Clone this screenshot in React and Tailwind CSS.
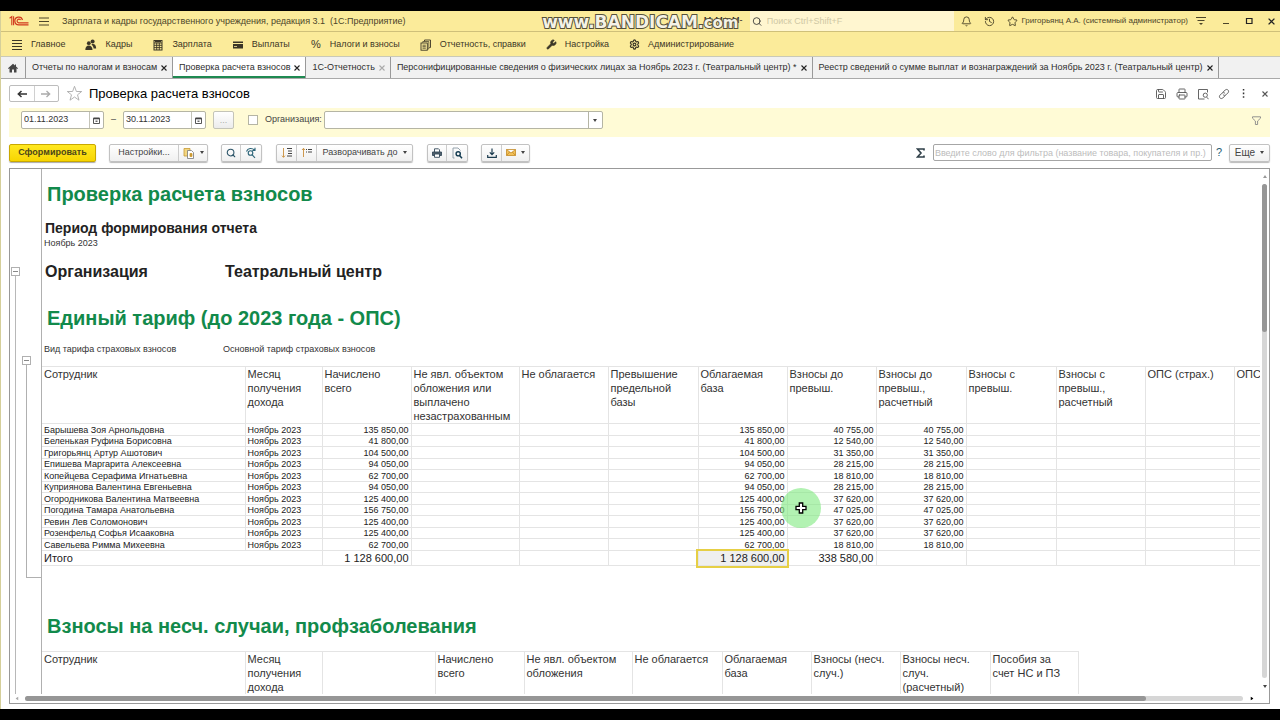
import React from "react";
import { Bell, History, Star, Search, Wrench, Save, Printer, Settings } from "lucide-react";

const employees = [
  ["Барышева Зоя Арнольдовна", "135 850,00", "40 755,00"],
  ["Беленькая Руфина Борисовна", "41 800,00", "12 540,00"],
  ["Григорьянц Артур Ашотович", "104 500,00", "31 350,00"],
  ["Епишева Маргарита Алексеевна", "94 050,00", "28 215,00"],
  ["Копейцева Серафима Игнатьевна", "62 700,00", "18 810,00"],
  ["Куприянова Валентина Евгеньевна", "94 050,00", "28 215,00"],
  ["Огородникова Валентина Матвеевна", "125 400,00", "37 620,00"],
  ["Погодина Тамара Анатольевна", "156 750,00", "47 025,00"],
  ["Ревин Лев Соломонович", "125 400,00", "37 620,00"],
  ["Розенфельд Софья Исааковна", "125 400,00", "37 620,00"],
  ["Савельева Римма Михеевна", "62 700,00", "18 810,00"],
];

const tariffColumns = [
  "Сотрудник",
  "Месяц получения дохода",
  "Начислено всего",
  "Не явл. объектом обложения или выплачено незастрахованным",
  "Не облагается",
  "Превышение предельной базы",
  "Облагаемая база",
  "Взносы до превыш.",
  "Взносы до превыш., расчетный",
  "Взносы с превыш.",
  "Взносы с превыш., расчетный",
  "ОПС (страх.)",
  "ОПС",
];

const accidentColumns = [
  "Сотрудник",
  "Месяц получения дохода",
  "",
  "Начислено всего",
  "Не явл. объектом обложения",
  "Не облагается",
  "Облагаемая база",
  "Взносы (несч. случ.)",
  "Взносы несч. случ. (расчетный)",
  "Пособия за счет НС и ПЗ",
];

function PeopleIcon() {
  return (
    <svg viewBox="0 0 12 12" className="h-3 w-3" fill="currentColor">
      <circle cx="7.6" cy="2.6" r="2" />
      <path d="M6.400 5.400c2.600-1 4.600.2 4.800 4H8.600C8.500 7.600 7.600 6.400 6.400 5.400z" />
      <circle cx="3.800" cy="4.200" r="1.900" />
      <path d="M.3 11c0-3 1.400-4.500 3.500-4.500S7.500 8 7.500 11z" />
    </svg>
  );
}

function CalculatorIcon() {
  return (
    <svg viewBox="0 0 12 12" className="h-3 w-3" fill="none" stroke="currentColor">
      <rect x="2" y="1.500" width="8" height="9.500" />
      <path d="M2 4h8M2 6.300h8M2 8.600h8M4.700 4v7M7.300 4v7" strokeWidth=".9" />
      <path d="M3 2.700h6" strokeWidth="1.400" />
    </svg>
  );
}

function CardIcon() {
  return (
    <svg viewBox="0 0 12 12" className="h-3 w-3" fill="currentColor">
      <path d="M1 2.500h10V4H1zM1 5h10v4.500H1z" />
      <path d="M2 7.500h3" stroke="#fbeb9a" strokeWidth=".8" />
    </svg>
  );
}

function ReportsIcon() {
  return (
    <svg viewBox="0 0 12 12" className="h-3 w-3" fill="none" stroke="currentColor" strokeWidth=".9">
      <path d="M4.500 2.300V1h6v7.500H9.300" />
      <path d="M2.800 3.800V2.500h6v7.500H7.500" strokeWidth=".7" />
      <rect x="1" y="4" width="6.300" height="7.200" />
      <path d="M2.500 6.200h3.300M2.500 7.700h3.300M2.500 9.200h3.300" strokeWidth=".8" />
    </svg>
  );
}

function MenuLines() {
  return (
    <svg viewBox="0 0 12 12" className="h-3 w-3" stroke="currentColor" strokeWidth="1.200">
      <path d="M1 1.500h10M1 4.500h10M1 7.500h10M1 10.500h10" />
    </svg>
  );
}

const sections = [
  ["Главное", <MenuLines />],
  ["Кадры", <PeopleIcon />],
  ["Зарплата", <CalculatorIcon />],
  ["Выплаты", <CardIcon />],
  ["Налоги и взносы", <span className="w-3 text-center text-[11px]">%</span>],
  ["Отчетность, справки", <ReportsIcon />],
  ["Настройка", <Wrench size={11} fill="currentColor" strokeWidth={1.5} />],
  ["Администрирование", <Settings size={11} strokeWidth={2.6} />],
];

const tabs = [
  ["Отчеты по налогам и взносам"],
  ["Проверка расчета взносов", "active"],
  ["1С-Отчетность", "muted"],
  ["Персонифицированные сведения о физических лицах за Ноябрь 2023 г. (Театральный центр) *"],
  ["Реестр сведений о сумме выплат и вознаграждений за Ноябрь 2023 г. (Театральный центр)"],
];

function Cross({ className }) {
  return (
    <svg viewBox="0 0 6 6" className={className} stroke="currentColor" strokeWidth="1.100">
      <path d="M.5.5l5 5M5.500.5l-5 5" />
    </svg>
  );
}

function Caret({ className = "text-[#444]" }) {
  return (
    <svg viewBox="0 0 4 3" className={"h-[3px] w-1 shrink-0 " + className} fill="currentColor">
      <path d="M0 0h4L2 3z" />
    </svg>
  );
}

function Logo() {
  return (
    <svg viewBox="0 0 20 12" className="h-3 w-5" fill="none" stroke="#d2381c">
      <path d="M.6 3.200L2.800 1.500v8.700M4.600 1.200v9" strokeWidth="1.100" />
      <path d="M13.500 5A3.900 3.900 0 1 0 9.800 9.900H19.500" strokeWidth="1.200" />
      <path d="M11.600 5A1.900 1.900 0 1 0 9.800 7.900H19.500" strokeWidth="1.100" />
    </svg>
  );
}

function TitleBar() {
  return (
    <header className="flex h-[21px] shrink-0 items-center border-b border-[#cfc07a] bg-[#fbeb9a] pl-2 text-[#4c4529]">
      <Logo />
      <button aria-label="Главное меню" className="ml-[10px]">
        <svg viewBox="0 0 10 9" className="h-[9px] w-[10px]" stroke="currentColor">
          <path d="M0 1h10M0 4.500h10M0 8h10" />
        </svg>
      </button>
      <h1 className="ml-[13px] grow whitespace-pre pt-[2px]">Зарплата и кадры государственного учреждения, редакция 3.1  (1С:Предприятие)</h1>
      <div className="relative mr-[8px] flex items-center">
        <div className="flex gap-1 text-[9px] text-[#222]">
          <button>M</button>
          <button>M+</button>
          <button>M-</button>
        </div>
        <div className="pointer-events-none absolute right-[4px] top-1/2 z-10 -translate-y-1/2 whitespace-nowrap pt-[3px] font-['DejaVu_Sans'] text-[17px] font-bold leading-none text-[#f4f2e6] [-webkit-text-stroke:2px_#55503a] [paint-order:stroke_fill]">
          www.BANDICAM<span className="text-[15px]">.com</span>
        </div>
      </div>
      <label className="flex h-full w-[204px] items-center gap-1 bg-[#fff6d0] pl-0.5">
        <Search size={11} strokeWidth={2} className="text-[#333]" />
        <input aria-label="Поиск" placeholder="Поиск Ctrl+Shift+F" className="w-full bg-transparent pt-px outline-none placeholder:text-[#cfc8a4]" />
      </label>
      <div className="ml-[7px] flex items-center gap-3">
        <button aria-label="Уведомления"><Bell size={11} strokeWidth={2} /></button>
        <button aria-label="История"><History size={11} strokeWidth={2} /></button>
        <button aria-label="Избранное"><Star size={11} strokeWidth={2} /></button>
      </div>
      <span className="ml-[3px] whitespace-nowrap text-[8px]">Григорьянц А.А. (системный администратор)</span>
      <button aria-label="Сервис" className="ml-[8px]">
        <svg viewBox="0 0 10 10" className="h-[10px] w-[10px]" stroke="currentColor">
          <path d="M0 1.500h10M1.500 4.500h7" />
          <path d="M3 7h4L5 9z" fill="currentColor" stroke="none" />
        </svg>
      </button>
      <button aria-label="Свернуть" className="ml-4">
        <svg viewBox="0 0 8 8" className="h-2 w-2" stroke="currentColor"><path d="M1 6.500h6" /></svg>
      </button>
      <button aria-label="Развернуть" className="ml-[15px]">
        <svg viewBox="0 0 8 8" className="h-2 w-2" fill="none" stroke="#222" strokeWidth="1.200"><path d="M1.500 1.500h5.500v5H1.500z" /></svg>
      </button>
      <button aria-label="Закрыть" className="ml-[15px] mr-[5px] text-[#222]"><Cross className="h-[7px] w-[7px]" /></button>
    </header>
  );
}

function SectionMenu() {
  return (
    <nav className="flex h-[25px] shrink-0 items-center gap-[20px] border-b border-[#c9c9b8] bg-[#fbeb9a] pl-[10px] pt-px text-[#3b3626]">
      {sections.map(([name, icon]) => (
        <a key={name} href="#" className="flex items-center gap-2 whitespace-nowrap">
          {icon}
          {name}
        </a>
      ))}
    </nav>
  );
}

function Tabs() {
  return (
    <div className="flex h-[22px] shrink-0 border-b border-[#a9a9a9] bg-[#f1f1f1] text-[#2e2e2e]">
      <button aria-label="Начальная страница" className="flex w-[25px] items-center justify-center border-r border-[#999] text-[#444]">
        <svg viewBox="0 0 10 10" className="h-[10px] w-[10px]" fill="currentColor">
          <path d="M5 .8L0 5.300l.7.7.8-.7v4.200h2.500V6.500h2v3h2.500V5.300l.8.7.7-.7L8 3.500V1.500H7v1.100z" />
        </svg>
      </button>
      {tabs.map(([name, state]) => (
        <div
          key={name}
          className={"flex items-center border-r border-[#999] " + (state === "active" ? "bg-white" : "")}
        >
          <div className={"flex h-full items-center border-b-2 px-[1px] " + (state === "active" ? "border-[#1f8a52]" : "border-transparent")}>
            <button className="h-full whitespace-nowrap pl-[5px] pr-[4px] pt-[2px]">{name}</button>
            <button aria-label="Закрыть вкладку" className={"mr-[4px] pt-[2px] " + (state === "muted" ? "text-[#aaa]" : "text-[#222]")}>
              <Cross className="h-[6px] w-[6px]" />
            </button>
          </div>
        </div>
      ))}
    </div>
  );
}

function FormHeader() {
  return (
    <div className="flex h-[29px] shrink-0 items-center pl-[8px] pr-[12px]">
      <div className="flex h-[17px] w-[50px] rounded-[2px] border border-[#bdbdbd]">
        <button aria-label="Назад" className="flex flex-1 items-center justify-center border-r border-[#d0d0d0]">
          <svg viewBox="0 0 10 8" className="h-2 w-[10px]" fill="none" stroke="#333" strokeWidth="1.500"><path d="M10 4H1.500M4.500 1L1.300 4l3.200 3" /></svg>
        </button>
        <button aria-label="Вперед" className="flex flex-1 items-center justify-center">
          <svg viewBox="0 0 10 8" className="h-2 w-[10px]" fill="none" stroke="#aaa" strokeWidth="1.300"><path d="M0 4h8.500M5.500 1l3.200 3-3.200 3" /></svg>
        </button>
      </div>
      <button aria-label="Добавить в избранное" className="ml-[7px] text-[#aaa]">
        <svg viewBox="0 0 17 17" className="h-[17px] w-[17px]" fill="none" stroke="currentColor" strokeWidth=".9"><path d="M8.500 1.300l1.900 5.200h5.300l-4.200 3.300 1.500 5.400-4.500-3.200L4 15.200l1.500-5.400L1.300 6.500h5.300z" /></svg>
      </button>
      <h2 className="ml-[6px] grow text-[13px] text-black">Проверка расчета взносов</h2>
      <div className="flex items-center gap-[9px] text-[#555]">
        <button aria-label="Сохранить"><Save size={12} strokeWidth={1.8} /></button>
        <button aria-label="Печать"><Printer size={12} strokeWidth={1.8} /></button>
        <button aria-label="Просмотр">
          <svg viewBox="0 0 12 12" className="h-3 w-3" fill="none" stroke="currentColor" strokeWidth=".9"><path d="M10.500 4.500V1.500h-9v9.500h6M9.800 9.200l1.700 2" /><circle cx="8.300" cy="7.200" r="2.100" /></svg>
        </button>
        <button aria-label="Получить ссылку">
          <svg viewBox="0 0 12 12" className="h-3 w-3" fill="none" stroke="currentColor" strokeWidth=".9" strokeLinecap="round">
            <path d="M5 4.200L7.200 2c1.800-1.700 4.500.7 2.900 2.700L7.900 6.900C7 7.700 5.800 7.500 5.200 6.800" />
            <path d="M7 7.800L4.800 10c-1.800 1.700-4.500-.7-2.900-2.700L4.100 5.100C5 4.300 6.200 4.500 6.800 5.200" />
          </svg>
        </button>
        <button aria-label="Ещё действия" className="px-[3px]">
          <svg viewBox="0 0 3 9" className="h-[9px] w-[3px]" fill="#333"><path d="M.8 0h1.500v1.600H.8zM.8 3.600h1.500v1.600H.8zM.8 7.200h1.500v1.600H.8z" /></svg>
        </button>
        <button aria-label="Закрыть форму" className="pl-[5px]"><Cross className="h-[6px] w-[6px]" /></button>
      </div>
    </div>
  );
}

function DateField({ label, value }) {
  return (
    <div className="flex h-[18px] w-[83px] rounded-[2px] border border-[#b5b5a4] bg-white">
      <input aria-label={label} defaultValue={value} className="w-0 grow pl-[2px] text-[#333] outline-none" />
      <button aria-label={"Выбрать: " + label} className="flex w-[14px] items-center justify-center border-l border-[#c4c4b8]">
        <svg viewBox="0 0 7 7" className="h-[7px] w-[7px]" fill="none" stroke="#444" strokeWidth=".9">
          <path d="M.5 1.200h6v5.300h-6z" /><path d="M.5 1.500h6" strokeWidth="1.600" /><path d="M2.500 4.200h2" strokeWidth="1.200" />
        </svg>
      </button>
    </div>
  );
}

function FilterBar() {
  return (
    <div className="ml-[8px] mr-[10px] flex h-[29px] shrink-0 items-center bg-[#fffbd6] pb-[5px] pl-[12px] pr-[9px] text-[#444]">
      <DateField label="Начало периода" value="01.11.2023" />
      <span className="w-[19px] text-center">–</span>
      <DateField label="Конец периода" value="30.11.2023" />
      <button className="ml-[7px] h-[18px] w-[21px] rounded-[2px] border border-[#c4c4b8] bg-gradient-to-b from-white to-[#ececec] leading-none text-[#aaa]">...</button>
      <label className="ml-[14px] flex items-center gap-[7px]">
        <input type="checkbox" className="h-[10px] w-[10px] appearance-none border border-[#b5b5a4] bg-white" />
        Организация:
      </label>
      <div className="relative ml-[2px] h-[18px] w-[279px]">
        <select aria-label="Организация" className="h-full w-full appearance-none rounded-[2px] border border-[#b5b5a4] bg-white"><option></option></select>
        <span className="pointer-events-none absolute inset-y-px right-px flex w-[14px] items-center justify-center border-l border-[#b5b5a4]"><Caret /></span>
      </div>
      <button aria-label="Отборы" className="ml-auto text-[#888]">
        <svg viewBox="0 0 9 9" className="h-[9px] w-[9px]" fill="none" stroke="currentColor" strokeWidth=".9"><path d="M.5.8h8v1.400L5.600 5v3.500H3.400V5L.5 2.200z" /></svg>
      </button>
    </div>
  );
}

const toolGroup = "flex h-[18px] rounded-[2px] border border-[#c2c2c2] bg-gradient-to-b from-white to-[#f0f0f0] shadow-[0_1px_1px_#bbb] divide-x divide-[#cccccc]";
const tool = "flex items-center justify-center";

function OutlineIcon({ mirrored }) {
  return (
    <svg viewBox="0 0 12 12" className="h-3 w-3" fill="none" stroke="#444">
      {mirrored ? (
        <>
          <path d="M2.500 10V1.500M1 3l1.500-1.700L4 3" stroke="#c98f3c" strokeWidth=".9" />
          <path d="M5 2.500h1M7 2.500h4M5 5h1M7 5h4" strokeWidth="1.100" />
        </>
      ) : (
        <>
          <path d="M2.500 1v9M1 8.700l1.500 1.700L4 8.700" stroke="#c98f3c" strokeWidth=".9" />
          <path d="M6 1.500h5M7 4h4M7 6.500h4M6 9h5" strokeWidth="1" />
        </>
      )}
    </svg>
  );
}

function Toolbar() {
  return (
    <div className="flex h-[31px] shrink-0 items-center pl-[8px] pr-[10px] text-[#444]">
      <button className="h-[18px] w-[87px] rounded-[2px] border border-[#c9a800] bg-gradient-to-b from-[#ffe81f] to-[#f7d500] font-bold text-[#4d4619] shadow-[0_1px_1px_#aaa]">Сформировать</button>
      <div className={toolGroup + " ml-[13px]"}>
        <button className={tool + " w-[69px]"}>Настройки...</button>
        <button aria-label="Варианты отчета" className={tool + " w-[28px] gap-[5px]"}>
          <svg viewBox="0 0 12 12" className="h-3 w-3" fill="#fff" stroke="#777" strokeWidth=".8">
            <path d="M1 1.500h6V9H1z" fill="#f3d680" stroke="#c79a35" /><path d="M4.500 3.500h4l2 2v6h-6z" /><path d="M7 6.500h2v3H7z" fill="#cc9a33" stroke="#cc9a33" />
          </svg>
          <Caret />
        </button>
      </div>
      <div className={toolGroup + " ml-[13px]"}>
        <button aria-label="Найти" className={tool + " w-[19px]"}><Search size={10} strokeWidth={2.6} className="text-[#2c5468]" /></button>
        <button aria-label="Найти далее" className={tool + " w-[20px]"}>
          <svg viewBox="0 0 12 12" className="h-3 w-3" fill="none" stroke="#2c6478" strokeWidth="1.100"><circle cx="5.500" cy="6" r="2.300" /><path d="M7.200 7.800L10 10.800M1.500 4.500C2.800.8 7 .8 9.500 3M10 .8v2.700H7.300" /></svg>
        </button>
      </div>
      <div className={toolGroup + " ml-[14px]"}>
        <button aria-label="Развернуть группы" className={tool + " w-[20px]"}><OutlineIcon /></button>
        <button aria-label="Свернуть группы" className={tool + " w-[20px]"}><OutlineIcon mirrored /></button>
        <button className={tool + " w-[95px] gap-[5px]"}>Разворачивать до <Caret /></button>
      </div>
      <div className={toolGroup + " ml-[14px]"}>
        <button aria-label="Печать отчета" className={tool + " w-[19px]"}>
          <svg viewBox="0 0 10 10" className="h-[10px] w-[10px]" fill="#fff" stroke="#34495a" strokeWidth=".9"><path d="M2.500 4V.8h4l1 1V4" /><path d="M.5 4h9v3.500h-9z" fill="#51606c" /><path d="M2.500 6h5v3.300h-5z" /></svg>
        </button>
        <button aria-label="Предварительный просмотр" className={tool + " w-[20px]"}>
          <svg viewBox="0 0 12 12" className="h-3 w-3" fill="none" stroke="#8a98a4" strokeWidth=".9"><path d="M3.500 11H2V1h5l2.500 2.500" /><circle cx="7.200" cy="6.800" r="2.100" stroke="#123a50" strokeWidth="1.400" /><path d="M8.600 8.500l2.400 2.700" stroke="#123a50" strokeWidth="1.500" /></svg>
        </button>
      </div>
      <div className={toolGroup + " ml-[13px]"}>
        <button aria-label="Сохранить отчет" className={tool + " w-[20px]"}>
          <svg viewBox="0 0 10 10" className="h-[10px] w-[10px]" fill="none" stroke="#1d3d50" strokeWidth="1.200"><path d="M5 .5v6M2.800 4.300L5 6.600l2.200-2.300M.7 7v2.300h8.600V7" /></svg>
        </button>
        <button aria-label="Отправить" className={tool + " w-[27px] gap-[5px]"}>
          <svg viewBox="0 0 10 7" className="h-[7px] w-[10px]" fill="#f2c15a" stroke="#c48a25" strokeWidth=".8"><path d="M.5.5h9v6h-9zM.5.5L5 4l4.500-3.500M.5 6.500L3.700 3M9.500 6.500L6.300 3" /></svg>
          <Caret />
        </button>
      </div>
      <button aria-label="Сумма" className="ml-auto">
        <svg viewBox="0 0 9 10" className="h-[10px] w-[9px]" fill="none" stroke="#2f3f48" strokeWidth="1.600"><path d="M8 2.500V1H1.500l3.500 4-3.500 4H8V7.500" /></svg>
      </button>
      <input aria-label="Фильтр" placeholder="Введите слово для фильтра (название товара, покупателя и пр.)" className="ml-[8px] h-[17px] w-[279px] rounded-[2px] border border-[#a6a6a6] px-[1px] outline-none placeholder:text-[#bcbcbc]" />
      <button className="ml-[4px] text-[11px] text-[#1d5a72]">?</button>
      <div className={toolGroup + " ml-[7px]"}>
        <button className={tool + " w-[39px] gap-[5px] text-[10px]"}>Еще <Caret /></button>
      </div>
    </div>
  );
}

function CollapseBox() {
  return (
    <button aria-label="Свернуть группу" className="flex h-[9px] w-[9px] shrink-0 items-center justify-center border border-[#b0b0b0] bg-white">
      <span className="h-px w-[5px] bg-[#888]" />
    </button>
  );
}

function GroupGutter() {
  return (
    <div className="flex w-8 shrink-0 border-r border-[#b0b0b0] pl-[1px]">
      <div className="flex w-[9px] flex-col items-center pt-[98px]">
        <CollapseBox />
        <span className="w-px grow bg-[#b8b8b8]" />
      </div>
      <div className="ml-[2px] flex grow flex-col pt-[187px]">
        <CollapseBox />
        <span className="ml-[4px] h-[213px] border-b border-l border-[#b0b0b0]" />
      </div>
    </div>
  );
}

const cell = "border border-[#e4e4e4] p-0 ";
const headCell = cell + "pl-[2px] text-left align-top text-[11px] font-normal leading-[14px] text-[#333]";
const total = cell + "pr-[2px] text-right leading-[14px]";

function TariffTable() {
  return (
    <table className="w-[1304px] table-fixed border-collapse text-[#222]">
      <colgroup>
        <col className="w-[203px]" />
        <col className="w-[77px]" />
        <col className="w-[89px]" />
        <col className="w-[108px]" />
        <col className="w-[89px]" />
        <col className="w-[90px]" />
        <col className="w-[89px]" />
        <col className="w-[89px]" />
        <col className="w-[90px]" />
        <col className="w-[90px]" />
        <col className="w-[89px]" />
        <col className="w-[89px]" />
        <col />
      </colgroup>
      <thead>
        <tr>
          {tariffColumns.map((name) => (
            <th key={name} className={headCell + " first:border-l-0"}>{name}</th>
          ))}
        </tr>
      </thead>
      <tbody>
        {employees.map(([name, base, due]) => (
          <tr key={name} className="h-[11px] leading-[10px] odd:h-[12px]">
            <td className={cell + "border-l-0 pl-[2px]"}>{name}</td>
            <td className={cell + "pl-[2px]"}>Ноябрь 2023</td>
            <td className={cell + "pr-[2px] text-right"}>{base}</td>
            <td className={cell} />
            <td className={cell} />
            <td className={cell} />
            <td className={cell + "pr-[2px] text-right"}>{base}</td>
            <td className={cell + "pr-[2px] text-right"}>{due}</td>
            <td className={cell + "pr-[2px] text-right"}>{due}</td>
            <td className={cell} />
            <td className={cell} />
            <td className={cell} />
            <td className={cell} />
          </tr>
        ))}
        <tr className="text-[11px]">
          <td colSpan={2} className={cell + "border-l-0 pl-[2px] leading-[14px]"}>Итого</td>
          <td className={total}>1 128 600,00</td>
          <td className={cell} />
          <td className={cell} />
          <td className={cell} />
          <td className={total + " bg-[#efefef] outline-2 outline-[#e6cf45]"}>1 128 600,00</td>
          <td className={total}>338 580,00</td>
          <td className={cell} />
          <td className={cell} />
          <td className={cell} />
          <td className={cell} />
          <td className={cell} />
        </tr>
      </tbody>
    </table>
  );
}

function AccidentTable() {
  return (
    <table className="w-[1037px] table-fixed border-collapse">
      <colgroup>
        <col className="w-[203px]" />
        <col className="w-[77px]" />
        <col className="w-[113px]" />
        <col className="w-[89px]" />
        <col className="w-[108px]" />
        <col className="w-[90px]" />
        <col className="w-[89px]" />
        <col className="w-[89px]" />
        <col className="w-[90px]" />
        <col />
      </colgroup>
      <thead>
        <tr className="h-[60px]">
          {accidentColumns.map((name) => (
            <th key={name} className={headCell + " first:border-l-0 last:pr-2"}>{name}</th>
          ))}
        </tr>
      </thead>
    </table>
  );
}

const sectionTitle = "pl-[5px] text-[20px] font-bold leading-[24px] text-[#128a4b]";

function Report() {
  return (
    <div className="min-w-0 flex-1 overflow-hidden text-[#222]">
      <h3 className={sectionTitle + " mt-[13px]"}>Проверка расчета взносов</h3>
      <h4 className="mt-[14px] pl-[3px] text-[14px] font-bold leading-[16px]">Период формирования отчета</h4>
      <p className="mt-[1px] pl-[2px] leading-[12px] text-[#333]">Ноябрь 2023</p>
      <div className="mt-[14px] flex pl-[3px] text-[16px] font-bold leading-[18px]">
        <span className="w-[180px]">Организация</span>
        <span>Театральный центр</span>
      </div>
      <h3 className={sectionTitle + " mt-[25px]"}>Единый тариф (до 2023 года - ОПС)</h3>
      <div className="mb-[11px] mt-[13px] flex pl-[2px] leading-[12px] text-[#333]">
        <span className="w-[179px]">Вид тарифа страховых взносов</span>
        <span>Основной тариф страховых взносов</span>
      </div>
      <TariffTable />
      <h3 className={sectionTitle + " mb-[13px] mt-[48px]"}>Взносы на несч. случаи, профзаболевания</h3>
      <AccidentTable />
    </div>
  );
}

function ReportPanel() {
  return (
    <div className="relative ml-[8px] mr-[10px] flex min-h-0 flex-1 flex-col border border-[#999] bg-white">
      <div className="flex min-h-0 flex-1 overflow-hidden">
        <GroupGutter />
        <Report />
        <div className="flex w-[9px] shrink-0 flex-col items-center pb-[6px] pt-[6px]">
          <Caret className="rotate-180 text-[#999]" />
          <div className="mb-[7px] mt-[6px] w-[5px] grow rounded-full bg-[#d6d6d6]">
            <div className="h-[148px] rounded-full bg-[#969696]" />
          </div>
          <Caret />
        </div>
      </div>
      <div className="flex h-[9px] shrink-0 items-center pl-[5px] pr-[15px]">
        <Caret className="rotate-90 text-[#aaa]" />
        <div className="ml-[6px] mr-[7px] h-[5px] grow rounded-full bg-[#d6d6d6]">
          <div className="h-full w-[92%] rounded-full bg-[#969696]" />
        </div>
        <Caret className="-rotate-90" />
      </div>
      <div className="pointer-events-none absolute left-[771px] top-[319px] flex h-10 w-10 items-center justify-center rounded-full bg-[#7fe97f]/60">
        <svg viewBox="0 0 12 12" className="h-3 w-3" fill="#fff" stroke="#000" strokeWidth="1.300">
          <path d="M4.300 1h3.400v3.300H11v3.400H7.700V11H4.300V7.700H1V4.300h3.300z" />
        </svg>
      </div>
    </div>
  );
}

export default function App() {
  return (
    <div className="flex h-screen flex-col bg-black pb-[11px] pt-[11px] font-['Liberation_Sans',Arial,sans-serif] text-[9px]">
      <main className="flex min-h-0 flex-1 flex-col overflow-hidden border-l border-[#d5cf9a] bg-white pb-[5px]">
        <TitleBar />
        <SectionMenu />
        <Tabs />
        <FormHeader />
        <FilterBar />
        <Toolbar />
        <ReportPanel />
      </main>
    </div>
  );
}
